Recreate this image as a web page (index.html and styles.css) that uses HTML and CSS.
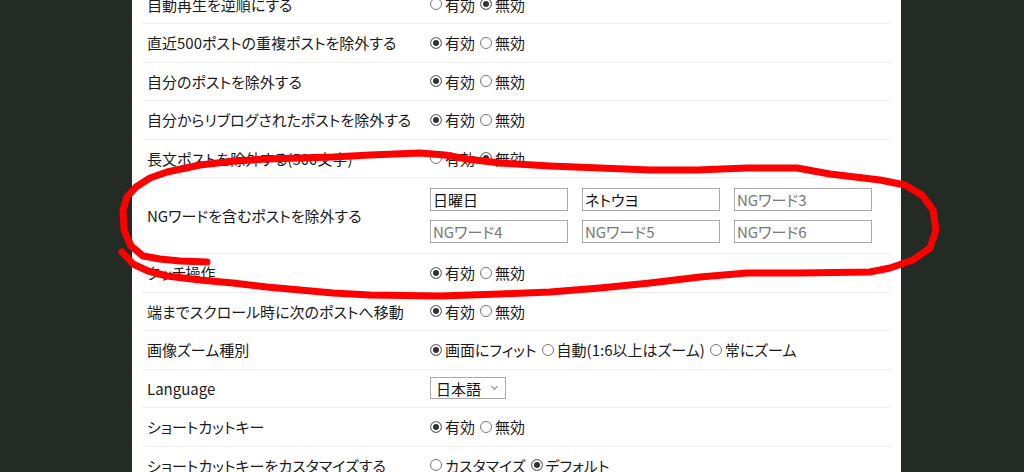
FILE: index.html
```html
<!DOCTYPE html>
<html lang="ja">
<head>
    <meta charset="UTF-8">
    <meta name="viewport" content="width=device-width, initial-scale=1.0">
    <title>設定</title>
    <link rel="stylesheet" href="styles.css">
</head>
<body>
    <div class="settings">
        <div class="row">
            <div class="row-name">自動再生を逆順にする</div>
            <div class="row-value">
                <label class="opt"><input type="radio" name="reverse">有効</label>
                <label class="opt"><input type="radio" name="reverse" checked>無効</label>
            </div>
        </div>
        <div class="row">
            <div class="row-name">直近500ポストの重複ポストを除外する</div>
            <div class="row-value">
                <label class="opt"><input type="radio" name="dup" checked>有効</label>
                <label class="opt"><input type="radio" name="dup">無効</label>
            </div>
        </div>
        <div class="row">
            <div class="row-name">自分のポストを除外する</div>
            <div class="row-value">
                <label class="opt"><input type="radio" name="mine" checked>有効</label>
                <label class="opt"><input type="radio" name="mine">無効</label>
            </div>
        </div>
        <div class="row">
            <div class="row-name">自分からリブログされたポストを除外する</div>
            <div class="row-value">
                <label class="opt"><input type="radio" name="reblog" checked>有効</label>
                <label class="opt"><input type="radio" name="reblog">無効</label>
            </div>
        </div>
        <div class="row">
            <div class="row-name">長文ポストを除外する(500文字)</div>
            <div class="row-value">
                <label class="opt"><input type="radio" name="long">有効</label>
                <label class="opt"><input type="radio" name="long" checked>無効</label>
            </div>
        </div>
        <div class="row row-ng">
            <div class="row-name">NGワードを含むポストを除外する</div>
            <div class="row-value ng-words">
                <input class="ng" type="text" value="日曜日" placeholder="NGワード1">
                <input class="ng" type="text" value="ネトウヨ" placeholder="NGワード2">
                <input class="ng" type="text" placeholder="NGワード3">
                <input class="ng" type="text" placeholder="NGワード4">
                <input class="ng" type="text" placeholder="NGワード5">
                <input class="ng" type="text" placeholder="NGワード6">
            </div>
        </div>
        <div class="row">
            <div class="row-name">タッチ操作</div>
            <div class="row-value">
                <label class="opt"><input type="radio" name="touch" checked>有効</label>
                <label class="opt"><input type="radio" name="touch">無効</label>
            </div>
        </div>
        <div class="row">
            <div class="row-name">端までスクロール時に次のポストへ移動</div>
            <div class="row-value">
                <label class="opt"><input type="radio" name="next" checked>有効</label>
                <label class="opt"><input type="radio" name="next">無効</label>
            </div>
        </div>
        <div class="row">
            <div class="row-name">画像ズーム種別</div>
            <div class="row-value">
                <label class="opt"><input type="radio" name="zoom" checked>画面にフィット</label>
                <label class="opt"><input type="radio" name="zoom">自動(1:6以上はズーム)</label>
                <label class="opt"><input type="radio" name="zoom">常にズーム</label>
            </div>
        </div>
        <div class="row">
            <div class="row-name">Language</div>
            <div class="row-value">
                <span class="select-wrap">
                    <select class="lang">
                        <option>日本語</option>
                        <option>English</option>
                    </select>
                </span>
            </div>
        </div>
        <div class="row">
            <div class="row-name">ショートカットキー</div>
            <div class="row-value">
                <label class="opt"><input type="radio" name="shortcut" checked>有効</label>
                <label class="opt"><input type="radio" name="shortcut">無効</label>
            </div>
        </div>
        <div class="row">
            <div class="row-name">ショートカットキーをカスタマイズする</div>
            <div class="row-value">
                <label class="opt"><input type="radio" name="custom">カスタマイズ</label>
                <label class="opt"><input type="radio" name="custom" checked>デフォルト</label>
            </div>
        </div>
    </div>
    <!-- hand-drawn annotation -->
    <svg class="scribble" viewBox="0 0 1024 472" width="1024" height="472">
        <path d="M207,262 L180,261 160,259 143,256 131,246 124,230 123,210 127,197 136,187 150,178 167,172 200,165 235,161 267,159 300,158 333,157 370,155 420,153 445,155 467,159 500,163 550,166 600,168 650,170 697,170 747,168 797,168 830,174 880,180 905,185 922,195 933,210 936,230 930,248 913,260 890,268 870,272 800,273 747,273 700,277 650,283 600,288 550,292 500,294 440,296 370,295 333,293 300,290 267,287 233,283 200,280 167,276 148,271 133,264 122,252" />
    </svg>
</body>
</html>
```

FILE: styles.css
```css
*{
    margin: 0;
    padding: 0;
    box-sizing: border-box;
}
body{
    background: #232b24;
    font-family: "Noto Sans CJK JP", "Liberation Sans", sans-serif;
    font-size: 15px;
    font-feature-settings: "palt";
    color: #1a1a1a;
    height: 472px;
    overflow: hidden;
}
.settings{
    width: 769px;
    margin: -14.5px 0 0 132px;
    padding: 0 10px;
    background: #fff;
    min-height: 520px;
}
.row{
    display: flex;
    align-items: center;
    min-height: 38.5px;
    border-bottom: 1px solid #efefef;
}
.row-name{
    width: 283px;
    padding-left: 5px;
}
.row-value{
    display: flex;
    align-items: center;
}
.opt{
    display: inline-flex;
    align-items: center;
}
.opt input{
    appearance: none;
    width: 12px;
    height: 12px;
    border: 1px solid #777;
    border-radius: 50%;
    margin: 0 3px 0 5px;
    background: #fff;
}
.opt input:checked{
    background: #333;
    box-shadow: inset 0 0 0 2px #fff;
}
.row-ng{
    padding: 10px 0;
}
.ng-words{
    display: grid;
    grid-template-columns: repeat(3, 138px);
    column-gap: 14px;
    row-gap: 9px;
    margin-left: 5px;
}
.ng{
    height: 23px;
    border: 1px solid #a9a9a9;
    padding: 0 2px;
    font-family: inherit;
    font-size: 15px;
    font-feature-settings: "palt";
    color: #111;
    outline: none;
}
.ng::placeholder{
    color: #777;
}
.select-wrap{
    position: relative;
    display: inline-block;
    margin-left: 5px;
}
.select-wrap::after{
    content: "";
    position: absolute;
    right: 9px;
    top: 7px;
    width: 4px;
    height: 4px;
    border-right: 1px solid #888;
    border-bottom: 1px solid #888;
    transform: rotate(45deg);
}
.lang{
    appearance: none;
    width: 76px;
    height: 22px;
    border: 1px solid #a9a9a9;
    padding-left: 5px;
    font-family: inherit;
    font-size: 15px;
    color: #111;
    background: #fff;
    outline: none;
}
.scribble{
    position: absolute;
    top: 0;
    left: 0;
    pointer-events: none;
}
.scribble path{
    fill: none;
    stroke: #ff0000;
    stroke-width: 7;
    stroke-linecap: round;
    stroke-linejoin: round;
}
```
